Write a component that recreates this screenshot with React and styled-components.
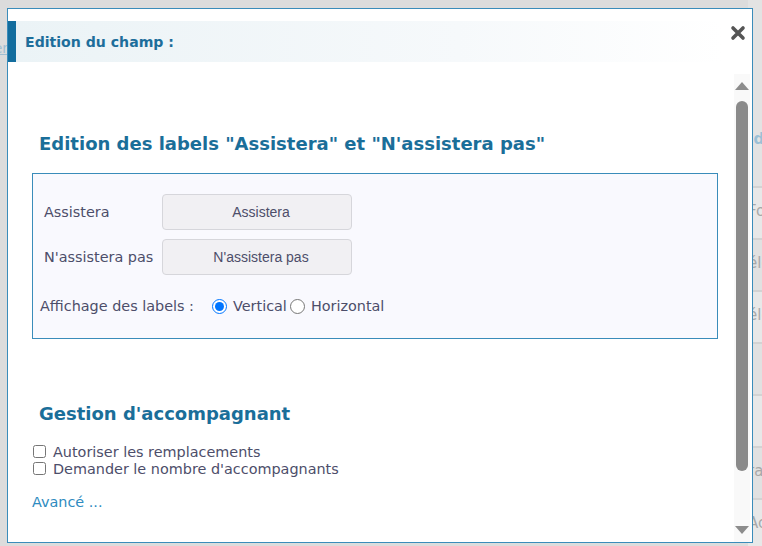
import React from "react";
import styled, { createGlobalStyle } from "styled-components";

const GlobalStyle = createGlobalStyle`
  html, body {
    margin: 0;
    padding: 0;
    background: #dcdcdc;
    font-family: "DejaVu Sans", Verdana, sans-serif;
  }
`;

// Backdrop page (what shows around the dialog)
const Screen = styled.div`
  position: relative;
  width: 762px;
  height: 546px;
  overflow: hidden;
  background: #dcdcdc;
  display: flex;
`;

const BackLeft = styled.div`
  width: 8px;
  padding-top: 38px;
  overflow: hidden;
  direction: rtl;

  span {
    font-size: 14px;
    color: #9fbfd3;
    text-decoration: underline;
  }
`;

const BackFill = styled.div`
  flex: 1;
`;

const BackRight = styled.div`
  width: 14px;
  padding-top: 130px;
  background: #e3e3e3;
  overflow: hidden;
  white-space: nowrap;
`;

const BackHead = styled.div`
  height: 56px;
  font-size: 15px;
  font-weight: bold;
  color: #9cc0d6;
`;

const BackRow = styled.div`
  height: 50px;
  line-height: 46px;
  border-top: 2px solid #d3d3d3;
  font-size: 15px;
  color: #a8a8a8;
  background: ${(p) => (p.alt ? "#e8e8e8" : "#e1e1e1")};
`;

// Dialog
const Dialog = styled.div`
  position: absolute;
  left: 7px;
  top: 8px;
  width: 744px;
  height: 533px;
  background: #fff;
  border: 1px solid #3a8cba;
  display: flex;
  flex-direction: column;
`;

const Header = styled.div`
  margin-top: 12px;
  height: 41px;
  display: flex;
  align-items: center;
  justify-content: space-between;
  border-left: 8px solid #136d9e;
  background: linear-gradient(to right, #ebf3f6 0%, #f6f9fb 60%, #ffffff 96%);
  padding-right: 6px;
`;

const Title = styled.div`
  padding-left: 9px;
  font-size: 14.1px;
  font-weight: bold;
  color: #1d6e9b;
`;

const Close = styled.button`
  border: 0;
  background: transparent;
  padding: 0;
  margin-top: -18px;
  width: 16px;
  height: 16px;
  cursor: pointer;
`;

const Body = styled.div`
  flex: 1;
  display: flex;
  margin-top: 12px;
  min-height: 0;
`;

const Content = styled.div`
  flex: 1;
  padding-left: 24px;
  padding-right: 16px;
  overflow: hidden;
  color: #4d4e6a;
  font-size: 14.4px;
`;

const SectionTitle = styled.h2`
  margin: ${(p) => p.top}px 0 0 7px;
  font-size: 18px;
  line-height: 22px;
  font-weight: bold;
  color: #1a6e99;
`;

const Fieldset = styled.div`
  margin-top: 18px;
  border: 1px solid #3a8cba;
  background: #f9f9fe;
  padding: 20px 0 22px;
  display: flex;
  flex-direction: column;
  gap: 9px;
`;

const FieldRow = styled.div`
  display: flex;
  align-items: center;
  padding-left: 11px;
`;

const FieldLabel = styled.label`
  width: 118px;
`;

const LabelInput = styled.input`
  box-sizing: border-box;
  width: 190px;
  height: 36px;
  border: 1px solid #d6d6db;
  border-radius: 4px;
  background: #f1f0f3;
  padding: 0 0 0 8px;
  text-align: center;
  font-family: "Liberation Sans", Arial, sans-serif;
  font-size: 14px;
  color: #4d4e6a;
  outline: none;
`;

const RadioRow = styled.div`
  display: flex;
  align-items: center;
  gap: 3px;
  height: 20px;
  margin-top: 12px;
  padding-left: 7px;
`;

const RadioCaption = styled.span`
  width: 169px;
`;

const RadioOption = styled.label`
  display: flex;
  align-items: center;
  gap: 6px;

  input {
    width: 15px;
    height: 15px;
    margin: 0;
    accent-color: #0075ff;
  }
`;

const Checks = styled.div`
  margin-top: 18px;
  padding-left: 1px;
  display: flex;
  flex-direction: column;
`;

const CheckRow = styled.label`
  display: flex;
  align-items: center;
  gap: 7px;
  height: 17px;

  input {
    width: 13px;
    height: 13px;
    margin: 0;
  }
`;

const Advanced = styled.a`
  display: block;
  margin-top: 17px;
  color: #2e8bc0;
  font-size: 14.4px;
  text-decoration: none;
`;

// Custom scrollbar drawing
const ScrollTrack = styled.div`
  width: 16px;
  margin-right: 2px;
  background: #f9f9f9;
  display: flex;
  flex-direction: column;
  align-items: center;
`;

const Arrow = styled.div`
  width: 0;
  height: 0;
  border-left: 7px solid transparent;
  border-right: 7px solid transparent;
  ${(p) =>
    p.down
      ? "border-top: 8px solid #8c8c8c; margin-top: auto; margin-bottom: 8px;"
      : "border-bottom: 8px solid #8c8c8c; margin-top: 8px;"}
`;

const Thumb = styled.div`
  margin-top: 11px;
  width: 12px;
  height: 370px;
  border-radius: 6px;
  background: #8a8a8a;
`;

function App() {
  return (
    <>
      <GlobalStyle />
      <Screen>
        <BackLeft>
          <span>Editer</span>
        </BackLeft>
        <BackFill />
        <BackRight>
          <BackHead>Idées</BackHead>
          <BackRow alt>Fonction</BackRow>
          <BackRow>élément</BackRow>
          <BackRow alt>élément</BackRow>
          <BackRow> </BackRow>
          <BackRow alt>(</BackRow>
          <BackRow>rang</BackRow>
          <BackRow alt>Accès</BackRow>
        </BackRight>

        <Dialog>
          <Header>
            <Title>Edition du champ :</Title>
            <Close aria-label="Fermer">
              <svg width="16" height="16" viewBox="0 0 16 16">
                <path
                  d="M3 3 L13 13 M13 3 L3 13"
                  stroke="#555"
                  strokeWidth="3.6"
                  strokeLinecap="round"
                />
              </svg>
            </Close>
          </Header>

          <Body>
            <Content>
              <SectionTitle top={59}>
                Edition des labels "Assistera" et "N'assistera pas"
              </SectionTitle>
              <Fieldset>
                <FieldRow>
                  <FieldLabel>Assistera</FieldLabel>
                  <LabelInput defaultValue="Assistera" />
                </FieldRow>
                <FieldRow>
                  <FieldLabel>N'assistera pas</FieldLabel>
                  <LabelInput defaultValue="N'assistera pas" />
                </FieldRow>
                <RadioRow>
                  <RadioCaption>Affichage des labels :</RadioCaption>
                  <RadioOption>
                    <input type="radio" name="display" defaultChecked />
                    Vertical
                  </RadioOption>
                  <RadioOption>
                    <input type="radio" name="display" />
                    Horizontal
                  </RadioOption>
                </RadioRow>
              </Fieldset>

              <SectionTitle top={64}>Gestion d'accompagnant</SectionTitle>
              <Checks>
                <CheckRow>
                  <input type="checkbox" />
                  Autoriser les remplacements
                </CheckRow>
                <CheckRow>
                  <input type="checkbox" />
                  Demander le nombre d'accompagnants
                </CheckRow>
              </Checks>
              <Advanced href="#">Avancé ...</Advanced>
            </Content>

            <ScrollTrack>
              <Arrow />
              <Thumb />
              <Arrow down />
            </ScrollTrack>
          </Body>
        </Dialog>
      </Screen>
    </>
  );
}

export default App;
